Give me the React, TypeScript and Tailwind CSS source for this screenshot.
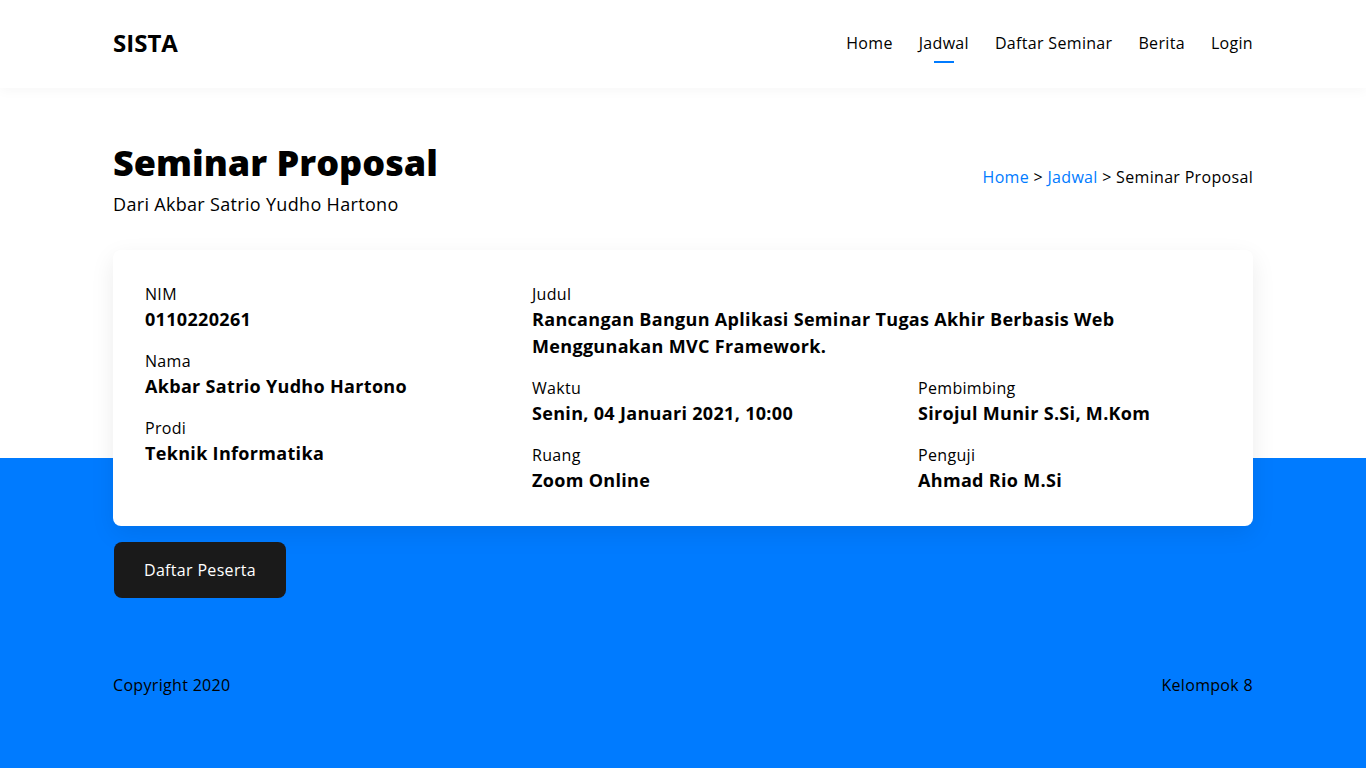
import React from "react";

const Item = ({ label, value }: { label: string; value: string }) => (
  <div className="mb-[16px]">
    <p className="text-[16px] leading-[24px] text-black">{label}</p>
    <p className="text-[18px] font-bold leading-[27px] text-black">{value}</p>
  </div>
);

export default function App() {
  return (
    <div className="min-h-[768px] bg-[#007bff] font-['Open_Sans',sans-serif] tracking-[0.02em] text-black">
      <header className="relative z-10 bg-white shadow-[0_2px_12px_rgba(0,0,0,0.04)]">
        <div className="mx-auto flex h-[88px] w-[1140px] items-center justify-between pb-[2px]">
          <span className="text-[24px] font-bold tracking-normal">SISTA</span>
          <nav className="flex gap-[26px] text-[16px]">
            <a>Home</a>
            <a className="relative">
              Jadwal
              <span className="absolute left-1/2 top-[30px] h-[2px] w-[20px] -translate-x-1/2 bg-[#007bff]" />
            </a>
            <a>Daftar Seminar</a>
            <a>Berita</a>
            <a>Login</a>
          </nav>
        </div>
      </header>

      <section className="bg-white pt-[50px]">
        <div className="mx-auto flex w-[1140px] items-center justify-between pb-[32px]">
          <div>
            <h1 className="text-[36px] font-extrabold leading-[50px] tracking-normal">Seminar Proposal</h1>
            <p className="mt-[3px] text-[18px] leading-[27px]">Dari Akbar Satrio Yudho Hartono</p>
          </div>
          <p className="mb-[2px] text-[16px]">
            <span className="text-[#007bff]">Home</span> &gt;{" "}
            <span className="text-[#007bff]">Jadwal</span> &gt; Seminar Proposal
          </p>
        </div>
      </section>

      <div className="bg-[linear-gradient(to_bottom,white_0px,white_208px,#007bff_208px)]">
        <div className="mx-auto w-[1140px]">
          <div className="grid grid-cols-[387px_386px_1fr] rounded-lg bg-white px-[32px] pt-[32px] pb-[16px] shadow-[0_8px_24px_rgba(0,0,0,0.08)]">
            <div>
              <Item label="NIM" value="0110220261" />
              <Item label="Nama" value="Akbar Satrio Yudho Hartono" />
              <Item label="Prodi" value="Teknik Informatika" />
            </div>
            <div className="col-span-2">
              <div className="mb-[16px]">
                <p className="text-[16px] leading-[24px]">Judul</p>
                <p className="w-[620px] text-[18px] font-bold leading-[27px]">
                  Rancangan Bangun Aplikasi Seminar Tugas Akhir Berbasis Web Menggunakan MVC Framework.
                </p>
              </div>
              <div className="grid grid-cols-[386px_1fr]">
                <div>
                  <Item label="Waktu" value="Senin, 04 Januari 2021, 10:00" />
                  <Item label="Ruang" value="Zoom Online" />
                </div>
                <div>
                  <Item label="Pembimbing" value="Sirojul Munir S.Si, M.Kom" />
                  <Item label="Penguji" value="Ahmad Rio M.Si" />
                </div>
              </div>
            </div>
          </div>

          <button className="ml-px mt-[16px] h-[56px] w-[172px] rounded-lg bg-[#1a1a1a] text-[16px] text-white">
            Daftar Peserta
          </button>

          <div className="flex justify-between pt-[75px] pb-[69px] text-[16px] leading-[24px]">
            <span>Copyright 2020</span>
            <span>Kelompok 8</span>
          </div>
        </div>
      </div>
    </div>
  );
}
